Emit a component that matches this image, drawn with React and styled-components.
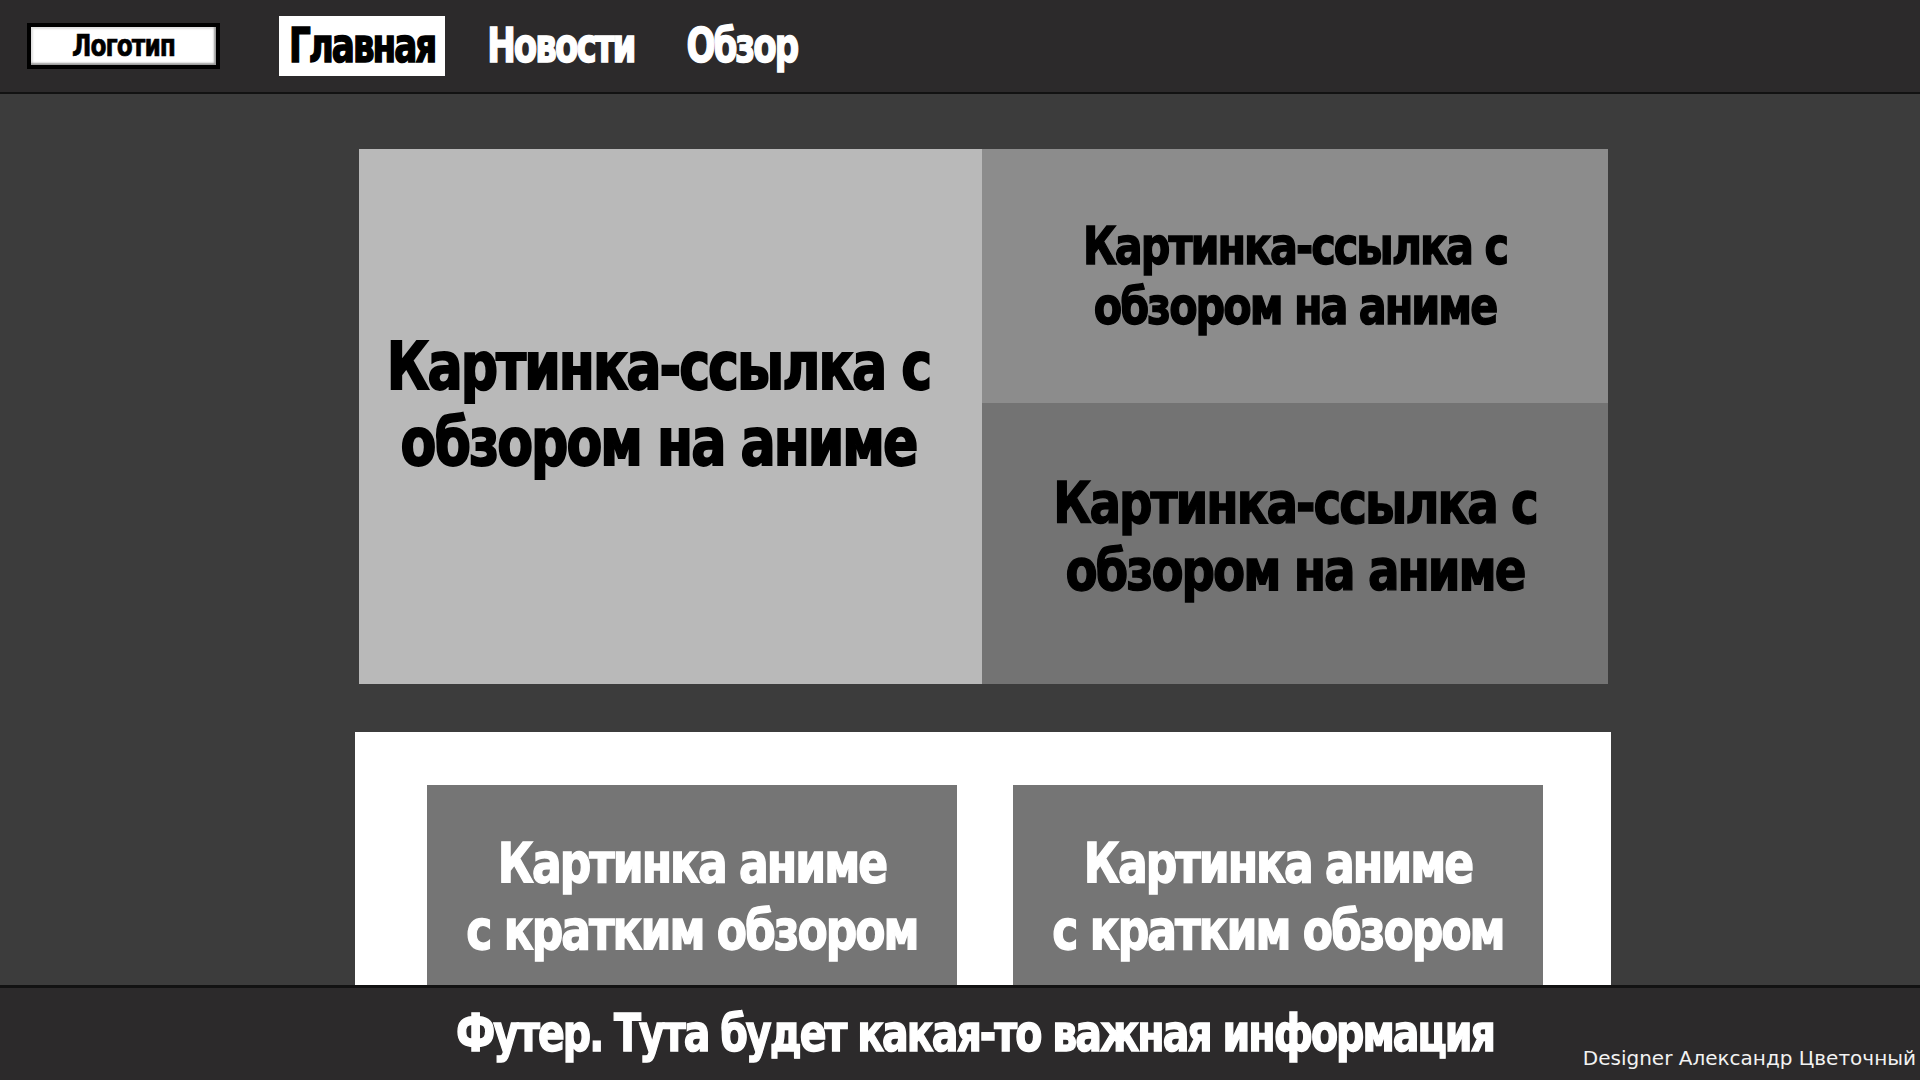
import React from 'react';
import styled, { createGlobalStyle } from 'styled-components';

// wireframe of the anime site main page

const Global = createGlobalStyle`
  html, body {
    margin: 0;
    padding: 0;
    background: #3c3c3c;
  }
  * {
    box-sizing: border-box;
  }
`;

// no Impact here, so a bold condensed face pulled up vertically
const heavy = `"DejaVu Sans Condensed", "DejaVu Sans", "Liberation Sans", sans-serif`;

const Stretch = styled.span`
  display: inline-block;
  transform: scaleY(${(p) => p.$y});
  transform-origin: center;
  -webkit-text-stroke: ${(p) => p.$stroke || 1.2}px currentColor;
`;

const Page = styled.div`
  height: 100vh;
  display: flex;
  flex-direction: column;
  overflow: hidden;
  font-family: ${heavy};
  font-weight: 700;
`;

const Header = styled.header`
  height: 94px;
  flex-shrink: 0;
  background: #2c2a2b;
  border-bottom: 2px solid #121212;
  display: flex;
  align-items: center;
  padding-left: 27px;
`;

const Logo = styled.div`
  width: 193px;
  height: 46px;
  background: #000;
  padding: 4px;
  margin-right: 59px;
`;

const LogoInner = styled.div`
  height: 100%;
  background: #fff;
  box-shadow: inset -2px -2px 2px #9a9a9a, inset 2px 2px 2px #e0e0e0;
  display: flex;
  align-items: center;
  justify-content: center;
  color: #000;
  font-size: 26px;
  letter-spacing: -1px;
`;

const Nav = styled.nav`
  display: flex;
  align-items: center;
  gap: 32px;
`;

const NavItem = styled.a`
  height: 60px;
  padding: 0 10px;
  display: flex;
  align-items: center;
  font-size: 38px;
  letter-spacing: -2px;
  color: ${(p) => (p.$active ? '#000' : '#fff')};
  background: ${(p) => (p.$active ? '#fff' : 'transparent')};
  text-decoration: none;
`;

const Main = styled.main`
  flex: 1;
  min-height: 0;
  overflow: hidden;
  background: #3c3c3c;
  padding: 55px 0 0 355px;
`;

const Hero = styled.section`
  width: 1249px;
  height: 535px;
  margin-left: 4px;
  display: grid;
  grid-template-columns: 623px 626px;
  grid-template-rows: 254px 281px;
`;

const Tile = styled.a`
  display: flex;
  align-items: center;
  justify-content: center;
  text-align: center;
  color: #000;
  text-decoration: none;
  background: ${(p) => p.$bg};
  font-size: ${(p) => p.$size}px;
  line-height: ${(p) => p.$lh}px;
  padding-bottom: ${(p) => p.$lift || 0}px;
  padding-right: ${(p) => p.$shift || 0}px;
  letter-spacing: -2px;
  grid-row: ${(p) => (p.$tall ? '1 / span 2' : 'auto')};
`;

const Reviews = styled.section`
  width: 1256px;
  margin-top: 48px;
  background: #fff;
  padding: 53px 67px 40px 72px;
  display: flex;
  gap: 56px;
`;

const Card = styled.a`
  width: 530px;
  height: 224px;
  background: #757575;
  display: flex;
  align-items: center;
  justify-content: center;
  text-align: center;
  color: #fff;
  text-decoration: none;
  font-size: 49px;
  line-height: 59px;
  letter-spacing: -2px;
`;

const Footer = styled.footer`
  height: 95px;
  flex-shrink: 0;
  background: #2c2a2b;
  border-top: 3px solid #121212;
  display: flex;
  align-items: center;
  justify-content: center;
  position: relative;
  color: #fff;
`;

const FooterText = styled.div`
  font-size: 44px;
  letter-spacing: -2px;
  margin: 0 0 4px 30px;
`;

const Credit = styled.div`
  position: absolute;
  right: 4px;
  bottom: 10px;
  font-family: "DejaVu Sans", sans-serif;
  font-weight: 400;
  font-size: 20px;
  color: #f2f2f2;
`;

const TITLE = (
  <>
    Картинка-ссылка с<br />обзором на аниме
  </>
);

export default function App() {
  return (
    <Page>
      <Global />
      <Header>
        <Logo>
          <LogoInner>
            <Stretch $y={1.15} $stroke={0.5}>Логотип</Stretch>
          </LogoInner>
        </Logo>
        <Nav>
          <NavItem $active>
            <Stretch $y={1.25}>Главная</Stretch>
          </NavItem>
          <NavItem>
            <Stretch $y={1.25}>Новости</Stretch>
          </NavItem>
          <NavItem>
            <Stretch $y={1.25}>Обзор</Stretch>
          </NavItem>
        </Nav>
      </Header>
      <Main>
        <Hero>
          <Tile $tall $bg="#b9b9b9" $size={58} $lh={67} $lift={24} $shift={24}>
            <Stretch $y={1.13} $stroke={1.6}>{TITLE}</Stretch>
          </Tile>
          <Tile $bg="#8c8c8c" $size={46} $lh={54} $lift={-6}>
            <Stretch $y={1.12}>{TITLE}</Stretch>
          </Tile>
          <Tile $bg="#737373" $size={52} $lh={61} $lift={14}>
            <Stretch $y={1.11}>{TITLE}</Stretch>
          </Tile>
        </Hero>
        <Reviews>
          <Card>
            <Stretch $y={1.12}>
              Картинка аниме<br />с кратким обзором
            </Stretch>
          </Card>
          <Card>
            <Stretch $y={1.12}>
              Картинка аниме<br />с кратким обзором
            </Stretch>
          </Card>
        </Reviews>
      </Main>
      <Footer>
        <FooterText>
          <Stretch $y={1.19}>Футер. Тута будет какая-то важная информация</Stretch>
        </FooterText>
        <Credit>Designer Александр Цветочный</Credit>
      </Footer>
    </Page>
  );
}
